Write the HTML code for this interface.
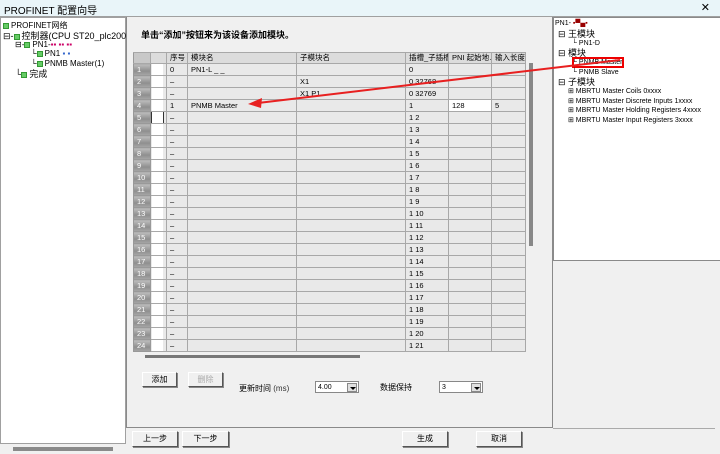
<!DOCTYPE html><html><head><meta charset="utf-8"><style>
*{box-sizing:border-box;margin:0;padding:0}
body{width:720px;height:454px;overflow:hidden;background:#f0f0f0;font-family:"Liberation Sans","Noto Sans CJK SC",sans-serif;font-size:8px;color:#000;position:relative}
.a{position:absolute}
.title{left:0;top:0;width:720px;height:17px;background:#e9f5f9;border-bottom:1px solid #a0a0a0;font-size:10px;padding:2px 0 0 4px}
.tree{left:0;top:17px;width:126px;height:427px;background:#fff;border:1px solid #a0a0a0}
.mid{left:126px;top:17px;width:427px;height:411px;border:1px solid #8a8a8a;border-top:none;background:#f0f0f0}
.right{left:553px;top:17px;width:167px;height:244px;background:#fff;border:1px solid #8a8a8a;border-right:none}
table{border-collapse:collapse;table-layout:fixed;position:absolute;left:133px;top:52px;width:392px}
td{height:12px;border:1px solid #a8a8a8;border-left:1px solid #9a9a9a;background:#e9e9e9;padding-left:3px;font-size:7.5px;white-space:nowrap;overflow:hidden;line-height:10px}
tr.h td{height:11px;background:#dcdcdc}
td.n{background:linear-gradient(#bdbdbd,#8f8f8f 60%,#a8a8a8);color:#fff;border-color:#999}
td.c{background:#e9e9e9;padding:0}
td.c span{display:block;width:11px;height:11px;background:#fff;margin-left:1px}
.btn{background:#f0f0f0;border:1px solid #707070;border-color:#fff #555 #555 #fff;box-shadow:1px 1px 0 #888;text-align:center;font-size:8px;line-height:14px}
.sel{background:#fff;border:1px solid #888;font-size:7px;padding-left:2px;line-height:11px}
.sel i{position:absolute;right:1px;top:1px;width:10px;height:9px;background:#e0e0e0;border:1px solid #888}
.sel i:after{content:"";position:absolute;left:2px;top:3px;border:3px solid transparent;border-top:3px solid #000}
.g{display:inline-block;width:6px;height:6px;background:#6c6;border:1px solid #393;vertical-align:middle;margin-right:2px}
.t{font-size:8px;white-space:nowrap;line-height:10px}
</style></head><body>
<div class="a title">PROFINET 配置向导<span style="position:absolute;right:10px;top:1px;font-size:11px">✕</span></div>
<div class="a tree">
<div class="a t" style="left:2px;top:3px"><span class="g"></span>PROFINET网络</div>
<div class="a t" style="left:2px;top:13px;font-size:9px">⊟-<span class="g"></span>控制器(CPU ST20_plc200smart)</div>
<div class="a t" style="left:14px;top:22px">⊟-<span class="g"></span>PN1-<span style="color:#c06">▪▪ ▪▪ ▪▪</span></div>
<div class="a t" style="left:30px;top:31px">└<span class="g"></span>PN1 <span style="color:#36c">▪ ▪</span></div>
<div class="a t" style="left:30px;top:41px">└<span class="g"></span>PNMB Master(1)</div>
<div class="a t" style="left:14px;top:51px;font-size:9px">└<span class="g"></span>完成</div>
<div class="a" style="left:12px;top:429px;width:100px;height:4px;background:#8a8a8a"></div>
</div>
<div class="a mid"></div>
<div class="a" style="left:141px;top:28px;font-size:9px;font-weight:bold">单击“添加”按钮来为该设备添加模块。</div>
<table>
<colgroup><col style="width:17px"><col style="width:16px"><col style="width:21px"><col style="width:109px"><col style="width:109px"><col style="width:43px"><col style="width:43px"><col style="width:34px"></colgroup>
<tr class="h"><td style="background:#c8c8c8"></td><td></td><td>序号</td><td>模块名</td><td>子模块名</td><td>插槽_子插槽</td><td>PNI 起始地…</td><td>输入长度 (</td></tr>
<tr><td class="n">1</td><td class="c"><span></span></td><td>0</td><td>PN1-L _ _</td><td></td><td>0</td><td></td><td></td></tr>
<tr><td class="n">2</td><td class="c"><span></span></td><td>–</td><td></td><td>X1</td><td>0 32768</td><td></td><td></td></tr>
<tr><td class="n">3</td><td class="c"><span></span></td><td>–</td><td></td><td>X1 P1</td><td>0 32769</td><td></td><td></td></tr>
<tr><td class="n">4</td><td class="c"><span></span></td><td>1</td><td>PNMB Master</td><td></td><td>1</td><td style="background:#fff">128</td><td>5</td></tr>
<tr><td class="n">5</td><td class="c"><span style="outline:1px solid #333"></span></td><td>–</td><td></td><td></td><td>1 2</td><td></td><td></td></tr>
<tr><td class="n">6</td><td class="c"><span></span></td><td>–</td><td></td><td></td><td>1 3</td><td></td><td></td></tr>
<tr><td class="n">7</td><td class="c"><span></span></td><td>–</td><td></td><td></td><td>1 4</td><td></td><td></td></tr>
<tr><td class="n">8</td><td class="c"><span></span></td><td>–</td><td></td><td></td><td>1 5</td><td></td><td></td></tr>
<tr><td class="n">9</td><td class="c"><span></span></td><td>–</td><td></td><td></td><td>1 6</td><td></td><td></td></tr>
<tr><td class="n">10</td><td class="c"><span></span></td><td>–</td><td></td><td></td><td>1 7</td><td></td><td></td></tr>
<tr><td class="n">11</td><td class="c"><span></span></td><td>–</td><td></td><td></td><td>1 8</td><td></td><td></td></tr>
<tr><td class="n">12</td><td class="c"><span></span></td><td>–</td><td></td><td></td><td>1 9</td><td></td><td></td></tr>
<tr><td class="n">13</td><td class="c"><span></span></td><td>–</td><td></td><td></td><td>1 10</td><td></td><td></td></tr>
<tr><td class="n">14</td><td class="c"><span></span></td><td>–</td><td></td><td></td><td>1 11</td><td></td><td></td></tr>
<tr><td class="n">15</td><td class="c"><span></span></td><td>–</td><td></td><td></td><td>1 12</td><td></td><td></td></tr>
<tr><td class="n">16</td><td class="c"><span></span></td><td>–</td><td></td><td></td><td>1 13</td><td></td><td></td></tr>
<tr><td class="n">17</td><td class="c"><span></span></td><td>–</td><td></td><td></td><td>1 14</td><td></td><td></td></tr>
<tr><td class="n">18</td><td class="c"><span></span></td><td>–</td><td></td><td></td><td>1 15</td><td></td><td></td></tr>
<tr><td class="n">19</td><td class="c"><span></span></td><td>–</td><td></td><td></td><td>1 16</td><td></td><td></td></tr>
<tr><td class="n">20</td><td class="c"><span></span></td><td>–</td><td></td><td></td><td>1 17</td><td></td><td></td></tr>
<tr><td class="n">21</td><td class="c"><span></span></td><td>–</td><td></td><td></td><td>1 18</td><td></td><td></td></tr>
<tr><td class="n">22</td><td class="c"><span></span></td><td>–</td><td></td><td></td><td>1 19</td><td></td><td></td></tr>
<tr><td class="n">23</td><td class="c"><span></span></td><td>–</td><td></td><td></td><td>1 20</td><td></td><td></td></tr>
<tr><td class="n">24</td><td class="c"><span></span></td><td>–</td><td></td><td></td><td>1 21</td><td></td><td></td></tr>
</table>
<div class="a" style="left:529px;top:63px;width:4px;height:183px;background:#888"></div>
<div class="a" style="left:145px;top:355px;width:215px;height:3px;background:#777"></div>
<div class="a btn" style="left:142px;top:372px;width:35px;height:15px">添加</div>
<div class="a btn" style="left:188px;top:372px;width:35px;height:15px;color:#aaa">删除</div>
<div class="a" style="left:239px;top:383px;font-size:8px">更新时间 <span style="color:#333">(ms)</span></div>
<div class="a sel" style="left:315px;top:381px;width:44px;height:12px">4.00<i></i></div>
<div class="a" style="left:380px;top:382px;font-size:8px">数据保持</div>
<div class="a sel" style="left:439px;top:381px;width:44px;height:12px">3<i></i></div>
<div class="a right">
<div class="a t" style="left:1px;top:1px;font-size:7px">PN1- <span style="color:#900">▪▀▄▪</span></div>
<div class="a t" style="left:4px;top:11px;font-size:9px">⊟ 王模块</div>
<div class="a t" style="left:18px;top:21px;font-size:7px">└ PN1-D</div>
<div class="a t" style="left:4px;top:30px;font-size:9px">⊟ 模块</div>
<div class="a t" style="left:18px;top:40px;font-size:7px">└ PNMB Master</div>
<div class="a" style="left:18px;top:39px;width:52px;height:11px;border:2px solid #e00"></div>
<div class="a t" style="left:18px;top:50px;font-size:7px">└ PNMB Slave</div>
<div class="a t" style="left:4px;top:59px;font-size:9px">⊟ 子模块</div>
<div class="a t" style="left:14px;top:69px;font-size:7px">⊞ MBRTU Master Coils 0xxxx</div>
<div class="a t" style="left:14px;top:79px;font-size:7px">⊞ MBRTU Master Discrete Inputs 1xxxx</div>
<div class="a t" style="left:14px;top:88px;font-size:7px">⊞ MBRTU Master Holding Registers 4xxxx</div>
<div class="a t" style="left:14px;top:98px;font-size:7px">⊞ MBRTU Master Input Registers 3xxxx</div>
</div>
<div class="a" style="left:553px;top:428px;width:162px;height:1px;background:#aaa"></div>
<svg class="a" style="left:0;top:0" width="720" height="454"><line x1="620" y1="60" x2="258" y2="103" stroke="#e82020" stroke-width="2"/><polygon points="248,104 262,98 261,108" fill="#e82020"/></svg>
<div class="a btn" style="left:132px;top:431px;width:46px;height:16px">上一步</div>
<div class="a btn" style="left:182px;top:431px;width:47px;height:16px">下一步</div>
<div class="a btn" style="left:402px;top:431px;width:46px;height:16px">生成</div>
<div class="a btn" style="left:476px;top:431px;width:46px;height:16px">取消</div>
</body></html>
